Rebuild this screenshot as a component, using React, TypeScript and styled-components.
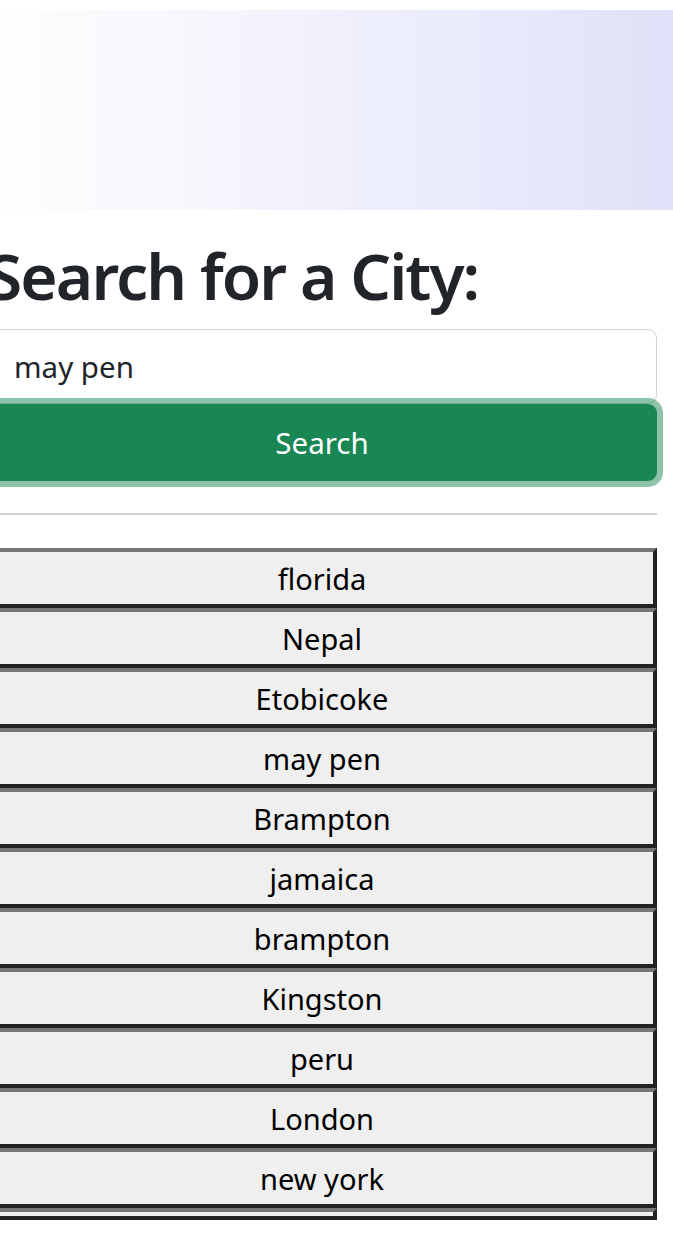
import React from "react";
import styled, { createGlobalStyle } from "styled-components";

const GlobalStyle = createGlobalStyle`
  html, body { margin: 0; padding: 0; background: #fff; }
  body { font-family: "Noto Sans", "Open Sans", sans-serif; color: #212529; overflow: hidden; }
  * { box-sizing: border-box; }
`;

const Page = styled.div`
  padding-top: 10px;
`;

const Banner = styled.header`
  height: 200px;
  background: linear-gradient(to right, #fefefe 0%, #f2f2fd 45%, #dfe1f8 100%);
`;

const Main = styled.main`
  margin-left: -13px;
  width: 670px;
  display: flex;
  flex-direction: column;
`;

const Title = styled.h1`
  margin: 26px 0 14px 0;
  height: 79px;
  font-size: 64px;
  font-weight: 600;
  line-height: 79px;
  color: #212529;
  letter-spacing: -1.9px;
  white-space: nowrap;
`;

const SearchInput = styled.input`
  display: block;
  width: 100%;
  height: 75px;
  border: 1px solid #ced4da;
  border-radius: 9px;
  padding: 0 0 0 26px;
  font-family: inherit;
  font-size: 29.5px;
  color: #212529;
  background: #fff;
  outline: none;
`;

const SearchButton = styled.button`
  display: block;
  width: 100%;
  height: 77px;
  border: none;
  border-radius: 9px;
  background: #198754;
  color: #fff;
  font-family: inherit;
  font-size: 29.5px;
  box-shadow: 0 0 0 6px rgba(25, 135, 84, 0.5);
  position: relative;
`;

const Divider = styled.hr`
  margin: 32px 0 33px 0;
  border: none;
  border-top: 2px solid #cfd0d1;
`;

const CityList = styled.div`
  display: flex;
  flex-direction: column;
`;

const CityButton = styled.button<{ $empty?: boolean }>`
  display: block;
  width: 100%;
  height: ${(p) => (p.$empty ? "12px" : "60px")};
  padding: 0;
  border-width: 4px;
  border-style: solid;
  border-color: #767676 #222 #222 #767676;
  background: #efefef;
  color: #000;
  font-family: inherit;
  font-size: 29px;
  line-height: 1;
`;

const cities = [
  "florida",
  "Nepal",
  "Etobicoke",
  "may pen",
  "Brampton",
  "jamaica",
  "brampton",
  "Kingston",
  "peru",
  "London",
  "new york",
];

export default function App() {
  return (
    <>
      <GlobalStyle />
      <Page>
        <Banner />
        <Main>
          <Title>Search for a City:</Title>
          <SearchInput defaultValue="may pen" />
          <SearchButton>Search</SearchButton>
          <Divider />
          <CityList>
            {cities.map((c) => (
              <CityButton key={c}>{c}</CityButton>
            ))}
            <CityButton $empty />
          </CityList>
        </Main>
      </Page>
    </>
  );
}
